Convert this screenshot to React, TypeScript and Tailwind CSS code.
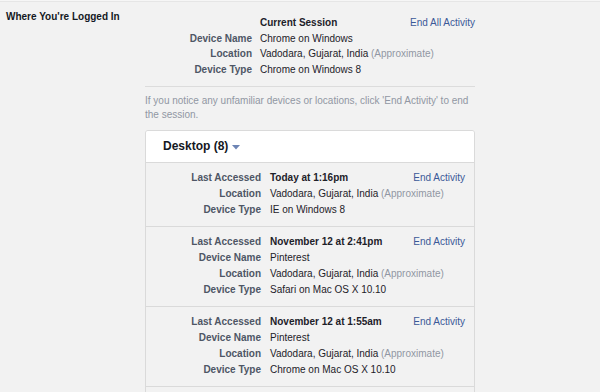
import React from 'react';

type Session = {
  accessed: string;
  name?: string;
  location: string;
  type: string;
};

const sessions: Session[] = [
  { accessed: 'Today at 1:16pm', location: 'Vadodara, Gujarat, India', type: 'IE on Windows 8' },
  { accessed: 'November 12 at 2:41pm', name: 'Pinterest', location: 'Vadodara, Gujarat, India', type: 'Safari on Mac OS X 10.10' },
  { accessed: 'November 12 at 1:55am', name: 'Pinterest', location: 'Vadodara, Gujarat, India', type: 'Chrome on Mac OS X 10.10' },
];

const Label: React.FC<{ children: React.ReactNode }> = ({ children }) => (
  <div className="text-right font-bold text-[#4e5665] whitespace-nowrap">{children}</div>
);

const Location: React.FC<{ place: string }> = ({ place }) => (
  <div className="text-[#1d2129] whitespace-nowrap">
    {place} <span className="text-[#9197a3]">(Approximate)</span>
  </div>
);

const SessionRow: React.FC<{ s: Session }> = ({ s }) => (
  <div className="border-t border-[#dadada] pt-[7px] pb-[8px] pr-[9px] flex">
    <div className="grid grid-cols-[115px_minmax(0,1fr)] gap-x-[9px] leading-[16px] flex-1 min-w-0">
      <Label>Last Accessed</Label>
      <div className="font-bold text-[#1d2129] whitespace-nowrap">{s.accessed}</div>
      {s.name && (
        <>
          <Label>Device Name</Label>
          <div className="text-[#1d2129]">{s.name}</div>
        </>
      )}
      <Label>Location</Label>
      <Location place={s.location} />
      <Label>Device Type</Label>
      <div className="text-[#1d2129] whitespace-nowrap">{s.type}</div>
    </div>
    <a className="leading-[16px] text-[#3b5998] whitespace-nowrap">End Activity</a>
  </div>
);

export default function App() {
  return (
    <div className="h-[392px] overflow-hidden bg-[#f2f2f2] text-[10px] font-['Liberation_Sans',Arial,sans-serif]">
      <div className="h-[2px] bg-[#f6f6f6] border-b border-[#e6e6e6]" />
      <div className="flex">
        <div className="w-[145px] shrink-0 pl-[6px] pt-[8px] leading-[14px] font-bold text-[#141823] text-[10px]">
          Where You're Logged In
        </div>
        <div className="w-[330px] shrink-0">
          <div className="pt-[13px] flex">
            <div className="grid grid-cols-[107px_minmax(0,1fr)] gap-x-[8px] leading-[15.67px] flex-1 min-w-0">
              <div />
              <div className="font-bold text-[#1d2129]">Current Session</div>
              <Label>Device Name</Label>
              <div className="text-[#1d2129]">Chrome on Windows</div>
              <Label>Location</Label>
              <Location place="Vadodara, Gujarat, India" />
              <Label>Device Type</Label>
              <div className="text-[#1d2129]">Chrome on Windows 8</div>
            </div>
            <a className="leading-[15.67px] text-[#3b5998] whitespace-nowrap">End All Activity</a>
          </div>
          <div className="mt-[8px] border-t border-[#dcdcdc]" />
          <p className="pt-[7px] leading-[14px] text-[#9197a3]">
            If you notice any unfamiliar devices or locations, click 'End Activity' to end the session.
          </p>
          <div className="mt-[8px] border border-[#dadada] rounded-t-[3px] overflow-hidden">
            <div className="h-[31px] bg-white flex items-center pl-[17px]">
              <span className="text-[12px] font-bold text-[#141823]">Desktop (8)</span>
              <svg width="8" height="5" viewBox="0 0 8 5" className="ml-[4px] mt-[3px]">
                <path d="M0 0 L8 0 L4 4.5 Z" fill="#6d84b4" />
              </svg>
            </div>
            {sessions.map((s, i) => (
              <SessionRow key={i} s={s} />
            ))}
            <div className="border-t border-[#dadada] h-[40px]" />
          </div>
        </div>
      </div>
    </div>
  );
}
